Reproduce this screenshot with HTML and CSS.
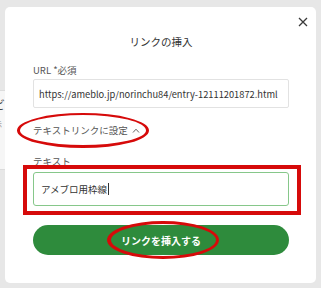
FILE: index.html
```html
<!DOCTYPE html>
<html lang="ja">
<head>
<meta charset="utf-8">
<link rel="stylesheet" href="styles.css">
</head>
<body>
<div class="peek"><span class="peek-big">ビ</span><span class="peek-small">示</span></div>
<div class="modal">
  <div class="close-row">
    <svg class="close" width="10" height="10" viewBox="0 0 10 10"><path d="M1 1L9 9M9 1L1 9" stroke="#3a3a3a" stroke-width="1.3" fill="none"/></svg>
  </div>
  <div class="body">
    <div class="title">リンクの挿入</div>
    <div class="label url-label">URL *必須</div>
    <div class="input url-input">https://ameblo.jp/norinchu84/entry-12111201872.html</div>
    <div class="toggle">テキストリンクに設定<svg class="chev" width="8" height="5" viewBox="0 0 8 5"><path d="M1 4.5L4 1.2L7 4.5" stroke="#666" stroke-width="1" fill="none"/></svg></div>
    <div class="label text-label">テキスト</div>
    <div class="input text-input">アメブロ用枠線<span class="caret"></span></div>
    <div class="button">リンクを挿入する</div>
  </div>
</div>
<div class="mark ellipse e1"></div>
<div class="mark rect"></div>
<div class="mark ellipse e2"></div>
</body>
</html>
```

FILE: styles.css
```css
html, body {
  margin: 0;
  padding: 0;
}
body {
  width: 321px;
  height: 288px;
  overflow: hidden;
  position: relative;
  background: #e7e7e7;
  font-family: "Noto Sans CJK JP", "Noto Sans", sans-serif;
  color: #333;
}
.peek {
  position: absolute;
  left: 0;
  top: 90px;
  width: 5px;
  height: 78px;
  background: #f6f6f6;
  border-top: 1px solid #dcdcdc;
  border-bottom: 1px solid #dcdcdc;
  overflow: hidden;
}
.peek-big {
  position: absolute;
  left: -7px;
  top: 7px;
  font-size: 12px;
  line-height: 14px;
  color: #444;
}
.peek-small {
  position: absolute;
  left: -5px;
  top: 29px;
  font-size: 7px;
  line-height: 8px;
  color: #888;
}
.modal {
  position: relative;
  margin: 7px 5px 0 5px;
  height: 276px;
  background: #fff;
  border-radius: 5px;
  box-sizing: border-box;
}
.close-row {
  height: 27px;
  display: flex;
  justify-content: flex-end;
  align-items: flex-start;
  padding: 10px 8px 0 0;
  box-sizing: border-box;
}
.close {
  display: block;
}
.body {
  padding: 0 27px 0 28px;
  display: flex;
  flex-direction: column;
}
.title {
  text-align: center;
  font-size: 10.5px;
  line-height: 16px;
  color: #333;
}
.label {
  font-size: 9.5px;
  line-height: 14px;
  color: #555;
}
.url-label {
  margin-top: 13px;
}
.input {
  box-sizing: border-box;
  display: flex;
  align-items: center;
}
.url-input {
  margin-top: 2px;
  height: 29px;
  border: 1px solid #e2e2e2;
  border-radius: 2px;
  padding-left: 5px;
  font-size: 9.3px;
  color: #333;
  white-space: nowrap;
  overflow: hidden;
}
.toggle {
  margin-top: 14px;
  font-size: 9.5px;
  line-height: 16px;
  color: #555;
  display: flex;
  align-items: center;
}
.chev {
  margin-left: 4px;
  display: block;
}
.text-label {
  margin-top: 16px;
}
.text-input {
  margin-top: 4px;
  height: 34px;
  border: 1.5px solid #86c78a;
  border-radius: 3px;
  padding-left: 7px;
  font-size: 9.5px;
  color: #333;
}
.caret {
  display: inline-block;
  width: 1px;
  height: 12px;
  background: #333;
  margin-left: 1px;
}
.button {
  margin-top: 19px;
  height: 30px;
  border-radius: 15px;
  background: #2e8b3c;
  color: #fff;
  font-weight: bold;
  font-size: 10px;
  display: flex;
  align-items: center;
  justify-content: center;
}
.mark {
  position: absolute;
  box-sizing: border-box;
  border-color: #d60a0a;
  border-style: solid;
}
.ellipse {
  border-radius: 50%;
}
.e1 {
  left: 17px;
  top: 113px;
  width: 132px;
  height: 35px;
  border-width: 2.5px 3px 3.5px 3px;
}
.e2 {
  left: 107px;
  top: 221px;
  width: 112px;
  height: 38px;
  border-width: 3px 3px 3.5px 4px;
}
.rect {
  left: 23px;
  top: 165px;
  width: 278px;
  height: 50px;
  border-width: 4.5px;
}
```
